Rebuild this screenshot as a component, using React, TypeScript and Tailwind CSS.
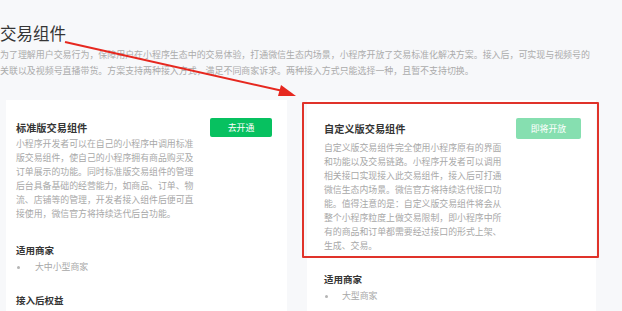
import React from "react";

const font = { fontFamily: '"Noto Sans CJK SC", "Noto Sans", sans-serif' };

const leftLines = [
  "小程序开发者可以在自己的小程序中调用标准",
  "版交易组件，使自己的小程序拥有商品购买及",
  "订单展示的功能。同时标准版交易组件的管理",
  "后台具备基础的经营能力，如商品、订单、物",
  "流、店铺等的管理，开发者接入组件后便可直",
  "接使用，微信官方将持续迭代后台功能。",
];

const rightLines = [
  "自定义版交易组件完全使用小程序原有的界面",
  "和功能以及交易链路。小程序开发者可以调用",
  "相关接口实现接入此交易组件，接入后可打通",
  "微信生态内场景。微信官方将持续迭代接口功",
  "能。值得注意的是：自定义版交易组件将会从",
  "整个小程序粒度上做交易限制，即小程序中所",
  "有的商品和订单都需要经过接口的形式上架、",
  "生成、交易。",
];

function Bullet({ text, indent }: { text: string; indent: string }) {
  return (
    <div className="flex items-center text-[8.9px] leading-[14px] text-[#a8a8a8]">
      <span className="ml-[1px] w-[3px] h-[3px] rounded-full bg-[#b5b5b5]" />
      <span className={indent}>{text}</span>
    </div>
  );
}

export default function App() {
  return (
    <div
      className="relative w-[622px] h-[311px] overflow-hidden bg-[#f7f8fa]"
      style={font}
    >
      <div className="pt-[23px] text-[16.5px] leading-[20px] text-[#353535]">
        交易组件
      </div>
      <div className="mt-[4px] text-[8.95px] leading-[16px] text-[#ababab] whitespace-nowrap">
        <div>
          为了理解用户交易行为，保障用户在小程序生态中的交易体验，打通微信生态内场景，小程序开放了交易标准化解决方案。接入后，可实现与视频号的
        </div>
        <div>
          关联以及视频号直播带货。方案支持两种接入方式，满足不同商家诉求。两种接入方式只能选择一种，且暂不支持切换。
        </div>
      </div>

      <div className="mt-[21px] flex gap-[20px] pl-[6px]">
        {/* left card */}
        <div className="w-[281px] h-[240px] bg-white pl-[10px] pr-[15px] pt-[18px]">
          <div className="flex items-center justify-between">
            <div className="text-[10.2px] leading-[14px] font-bold text-[#353535]">
              标准版交易组件
            </div>
            <div className="w-[62px] h-[19px] rounded-[2px] bg-[#07c160] text-white text-[8.9px] flex items-center justify-center">
              去开通
            </div>
          </div>
          <div className="text-[8.9px] leading-[14px] text-[#a8a8a8] whitespace-nowrap">
            {leftLines.map((l) => (
              <div key={l}>{l}</div>
            ))}
          </div>
          <div className="mt-[22px] text-[9.5px] leading-[14px] font-bold text-[#353535]">
            适用商家
          </div>
          <div className="mt-[3px]">
            <Bullet text="大中小型商家" indent="pl-[15px]" />
          </div>
          <div className="mt-[19px] text-[9.5px] leading-[14px] font-bold text-[#353535]">
            接入后权益
          </div>
        </div>

        {/* right card */}
        <div className="w-[289px] h-[240px] bg-white pl-[17px] pr-[15px] pt-[18px]">
          <div className="flex items-center justify-between">
            <div className="text-[10.2px] leading-[14px] font-bold text-[#353535]">
              自定义版交易组件
            </div>
            <div className="w-[65px] h-[21px] rounded-[2px] bg-[#86dfb0] text-white text-[8.9px] flex items-center justify-center">
              即将开放
            </div>
          </div>
          <div className="mt-[2px] text-[8.9px] leading-[14px] text-[#a8a8a8] whitespace-nowrap">
            {rightLines.map((l) => (
              <div key={l}>{l}</div>
            ))}
          </div>
          <div className="mt-[19px] text-[9.5px] leading-[14px] font-bold text-[#353535]">
            适用商家
          </div>
          <div className="mt-[3px]">
            <Bullet text="大型商家" indent="pl-[14px]" />
          </div>
        </div>
      </div>

      {/* red annotation box */}
      <div className="absolute left-[302px] top-[102px] w-[297px] h-[156px] border-2 border-[#e0332a] rounded-[1px]" />

      {/* red arrow */}
      <svg
        className="absolute left-0 top-0 pointer-events-none"
        width="622"
        height="311"
        viewBox="0 0 622 311"
      >
        <line x1="65" y1="42" x2="283" y2="91" stroke="#e6281f" strokeWidth="2" />
        <polygon points="296,96 281,85 278,96" fill="#e6281f" />
      </svg>
    </div>
  );
}
